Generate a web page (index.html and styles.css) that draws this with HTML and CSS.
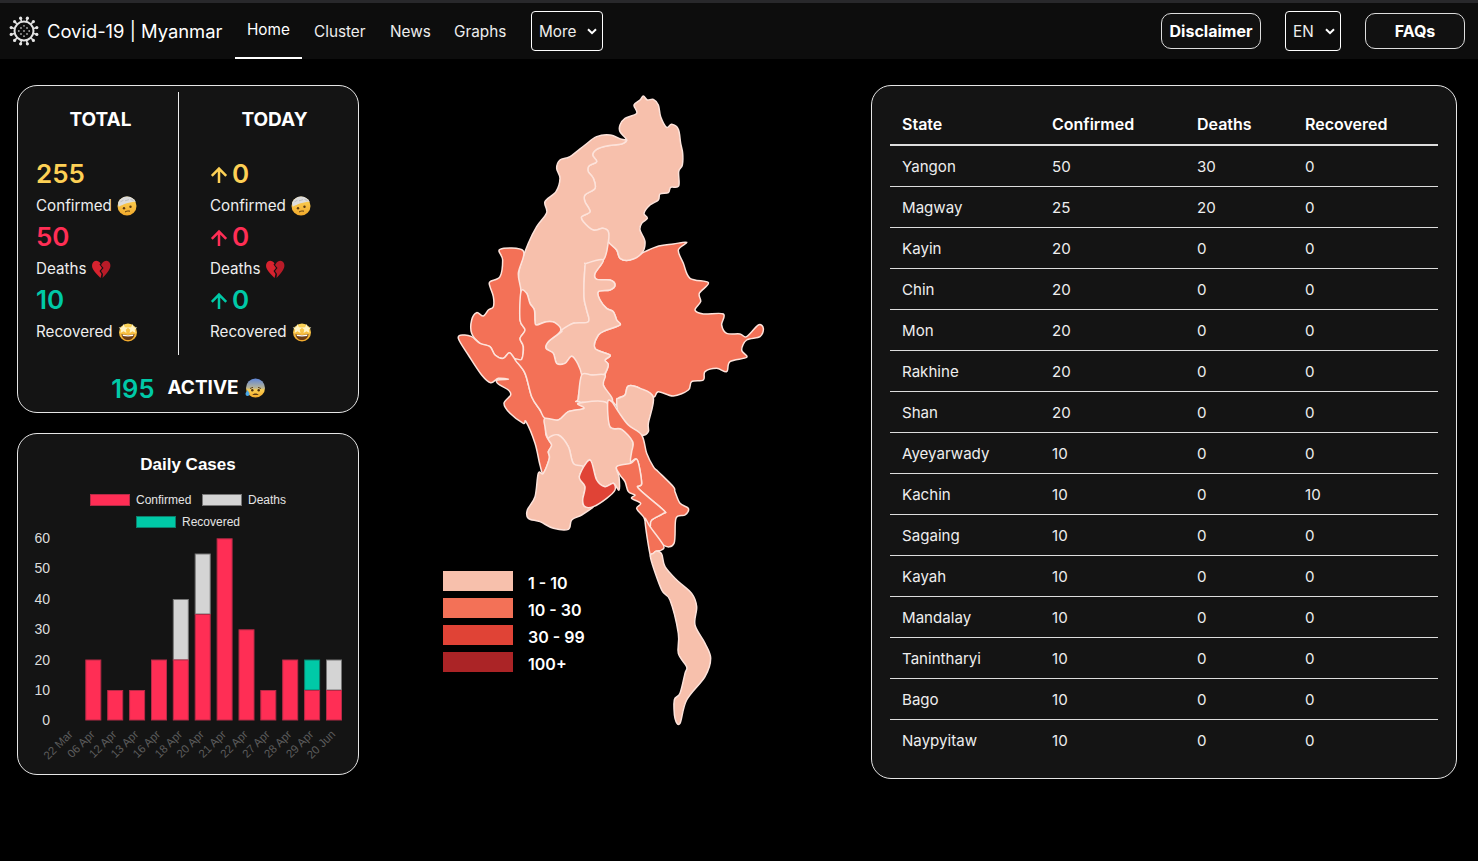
FILE: index.html
```html
<!DOCTYPE html>
<html lang="en">
<head>
<meta charset="utf-8">
<title>Covid-19 | Myanmar</title>
<link rel="stylesheet" href="styles.css">
</head>
<body>
<svg class="defs" aria-hidden="true">
  <defs>
    <linearGradient id="g-face" x1="0" y1="0" x2="0" y2="1"><stop offset="0" stop-color="#fcd65a"/><stop offset="1" stop-color="#f2a92b"/></linearGradient>
    <linearGradient id="g-anx" x1="0" y1="0" x2="0" y2="1"><stop offset="0" stop-color="#5f86d8"/><stop offset=".5" stop-color="#b9b596"/><stop offset=".6" stop-color="#fbcf52"/><stop offset="1" stop-color="#f2a92b"/></linearGradient>
    <symbol id="e-band" viewBox="0 0 20 20">
      <circle cx="10" cy="10" r="9.500" fill="url(#g-face)"/>
      <path d="M1.200 6.200C3 2.500 6.500.5 10 .5c3.800 0 7 2 8.800 5.200C14 5.500 6 8 1.800 10.800 1 9 1 7.500 1.200 6.200z" fill="#dcdcdc"/>
      <path d="M3.500 5.800l3-1.600M8 4.800l4-1.200M13.500 3.500l3 1" stroke="#b0b0b0" stroke-width=".7"/>
      <circle cx="7" cy="12.200" r="1.200" fill="#5b3a12"/><circle cx="13.500" cy="10.800" r="1.200" fill="#5b3a12"/>
      <path d="M8 16c1.600-1 3.500-1.200 5-.8" stroke="#5b3a12" stroke-width="1" fill="none"/>
    </symbol>
    <symbol id="e-heart" viewBox="0 0 20 20">
      <path d="M9.500 4.500C8 2 5 1 3 2.500.5 4.500.5 8 2.500 11c1.500 2.500 4.500 5.500 7 8l1-4-2-3 2.500-3-2.500-3.500z" fill="#d8232f"/>
      <path d="M11 4.500C12.500 2 15.500 1 17.500 2.500c2.500 2 2.500 5.500.5 8.500-1.500 2.500-4 5.500-6.500 8l.5-4-2-3 2.500-3-2.500-3z" fill="#b81b28"/>
    </symbol>
    <symbol id="e-star" viewBox="0 0 20 20">
      <circle cx="10" cy="10.500" r="9" fill="url(#g-face)"/>
      <path d="M5.500 2l1.400 3.200 3.400.3-2.600 2.200.8 3.400-3-1.800-3 1.800.8-3.400L.7 5.500l3.400-.3z" fill="#fff3c4"/>
      <path d="M14.500 2l1.400 3.200 3.400.3-2.600 2.200.8 3.400-3-1.800-3 1.800.8-3.400L9.700 5.500l3.400-.3z" fill="#fff3c4"/>
      <path d="M3.500 12c4 1.200 9 1.200 13 0-.5 4-3.200 6-6.500 6s-6-2-6.500-6z" fill="#6d3d12"/>
      <path d="M4.500 12.600c3.500.8 7.500.8 11 0l-.4 1.500c-3 .6-7.200.6-10.200 0z" fill="#fff"/>
    </symbol>
    <symbol id="e-anx" viewBox="0 0 20 20">
      <circle cx="10.500" cy="10" r="9.500" fill="url(#g-anx)"/>
      <path d="M5 10.500l3-1.200M16 10.500l-3-1.200" stroke="#5b3a12" stroke-width=".9"/>
      <circle cx="7.300" cy="12.300" r="1.200" fill="#4b2f10"/><circle cx="13.700" cy="12.300" r="1.200" fill="#4b2f10"/>
      <path d="M7.500 17c.6-2 5.400-2 6 0z" fill="#5b3a12"/>
      <path d="M2.500 12c1 1.800 2 2.800 2 4a2 2 0 0 1-4 0c0-1.200 1-2.200 2-4z" fill="#49a8e8"/>
    </symbol>
    <symbol id="arrow" viewBox="0 0 18 18">
      <path d="M9 17V3M1.800 9.800L9 2.600l7.200 7.200" fill="none" stroke="currentColor" stroke-width="2.500"/>
    </symbol>
    <symbol id="chev" viewBox="0 0 10 7">
      <path d="M1 1.200l4 4 4-4" fill="none" stroke="#fff" stroke-width="2"/>
    </symbol>
  </defs>
</svg>

<header class="topbar">
  <a class="brand">
    <svg class="logo" viewBox="0 0 30 30" aria-hidden="true">
      <circle cx="15" cy="15" r="9.500" fill="none" stroke="#e4e4e4" stroke-width="2"/>
      <path stroke="#e4e4e4" stroke-width="1.500" d="M17.600 5.300L18.400 2.200M22.100 7.900L24.400 5.600M24.700 12.400L27.800 11.600M24.700 17.600L27.800 18.400M22.100 22.100L24.400 24.400M17.600 24.700L18.400 27.800M12.400 24.700L11.600 27.800M7.900 22.100L5.600 24.400M5.300 17.600L2.200 18.400M5.300 12.400L2.200 11.600M7.900 7.900L5.600 5.600M12.400 5.300L11.600 2.200"/>
      <g fill="#e4e4e4">
        <circle cx="18.400" cy="2.200" r="1.600"/><circle cx="24.400" cy="5.600" r="1.600"/><circle cx="27.800" cy="11.600" r="1.600"/><circle cx="27.800" cy="18.400" r="1.600"/><circle cx="24.400" cy="24.400" r="1.600"/><circle cx="18.400" cy="27.800" r="1.600"/><circle cx="11.600" cy="27.800" r="1.600"/><circle cx="5.600" cy="24.400" r="1.600"/><circle cx="2.200" cy="18.400" r="1.600"/><circle cx="2.200" cy="11.600" r="1.600"/><circle cx="5.600" cy="5.600" r="1.600"/><circle cx="11.600" cy="2.200" r="1.600"/>
      </g>
      <g fill="#aaa">
        <circle cx="15" cy="15" r=".9"/><circle cx="12" cy="12" r=".9"/><circle cx="18" cy="12" r=".9"/><circle cx="12" cy="18" r=".9"/><circle cx="18" cy="18" r=".9"/><circle cx="15" cy="9.800" r=".9"/><circle cx="15" cy="20.200" r=".9"/><circle cx="9.800" cy="15" r=".9"/><circle cx="20.200" cy="15" r=".9"/>
      </g>
    </svg>
    <span>Covid-19 | Myanmar</span>
  </a>
  <nav class="nav">
    <a class="nav-link is-active">Home</a>
    <a class="nav-link">Cluster</a>
    <a class="nav-link">News</a>
    <a class="nav-link">Graphs</a>
    <div class="select select-more"><span>More</span><svg class="chev"><use href="#chev"/></svg></div>
  </nav>
  <div class="actions">
    <button class="pill">Disclaimer</button>
    <div class="select select-lang"><span>EN</span><svg class="chev"><use href="#chev"/></svg></div>
    <button class="pill">FAQs</button>
  </div>
</header>

<main class="main">
  <section class="left">
    <div class="card stats">
      <div class="stat-cols">
        <div class="col col-total">
          <h2 class="col-head">TOTAL</h2>
          <div class="val yellow">255</div>
          <div class="lab">Confirmed <svg class="emo"><use href="#e-band"/></svg></div>
          <div class="val red">50</div>
          <div class="lab">Deaths <svg class="emo"><use href="#e-heart"/></svg></div>
          <div class="val teal">10</div>
          <div class="lab">Recovered <svg class="emo"><use href="#e-star"/></svg></div>
        </div>
        <div class="col col-today">
          <h2 class="col-head">TODAY</h2>
          <div class="val yellow"><svg class="arr"><use href="#arrow"/></svg>0</div>
          <div class="lab">Confirmed <svg class="emo"><use href="#e-band"/></svg></div>
          <div class="val red"><svg class="arr"><use href="#arrow"/></svg>0</div>
          <div class="lab">Deaths <svg class="emo"><use href="#e-heart"/></svg></div>
          <div class="val teal"><svg class="arr"><use href="#arrow"/></svg>0</div>
          <div class="lab">Recovered <svg class="emo"><use href="#e-star"/></svg></div>
        </div>
      </div>
      <div class="active"><span class="val teal">195</span><strong>ACTIVE</strong><svg class="emo"><use href="#e-anx"/></svg></div>
    </div>

    <div class="card chart">
      <svg class="chart-svg" viewBox="18 434 340 340" role="img" aria-label="Daily Cases chart">
        <text class="c-title" x="188" y="470">Daily Cases</text>
        <rect class="b-conf" x="90.500" y="494.500" width="39" height="11"/><text class="c-leg" x="136" y="504">Confirmed</text>
        <rect class="b-death" x="202.500" y="494.500" width="39" height="11"/><text class="c-leg" x="248" y="504">Deaths</text>
        <rect class="b-rec" x="136.500" y="516.500" width="39" height="11"/><text class="c-leg" x="182" y="526">Recovered</text>

        <text class="c-y" x="50" y="543">60</text><text class="c-y" x="50" y="573">50</text><text class="c-y" x="50" y="604">40</text><text class="c-y" x="50" y="634">30</text><text class="c-y" x="50" y="665">20</text><text class="c-y" x="50" y="695">10</text><text class="c-y" x="50" y="725">0</text>

        <rect class="b-conf" x="85.800" y="660" width="15" height="60"/>
        <rect class="b-conf" x="107.700" y="690.500" width="15" height="29.500"/>
        <rect class="b-conf" x="129.600" y="690.500" width="15" height="29.500"/>
        <rect class="b-conf" x="151.500" y="660" width="15" height="60"/>
        <rect class="b-death" x="173.300" y="599.500" width="15" height="60.500"/>
        <rect class="b-conf" x="173.300" y="660" width="15" height="60"/>
        <rect class="b-death" x="195.200" y="554" width="15" height="60"/>
        <rect class="b-conf" x="195.200" y="614.500" width="15" height="105.500"/>
        <rect class="b-conf" x="217.100" y="538.800" width="15" height="181.200"/>
        <rect class="b-conf" x="239" y="629.800" width="15" height="90.200"/>
        <rect class="b-conf" x="260.800" y="690.500" width="15" height="29.500"/>
        <rect class="b-conf" x="282.700" y="660" width="15" height="60"/>
        <rect class="b-rec" x="304.600" y="660" width="15" height="30"/>
        <rect class="b-conf" x="304.600" y="690.500" width="15" height="29.500"/>
        <rect class="b-death" x="326.500" y="660" width="15" height="30"/>
        <rect class="b-conf" x="326.500" y="690.500" width="15" height="29.500"/>

        <text class="c-x" transform="rotate(-45 73.500 735)" x="73.500" y="735">22 Mar</text>
        <text class="c-x" transform="rotate(-45 95.400 735)" x="95.400" y="735">06 Apr</text>
        <text class="c-x" transform="rotate(-45 117.300 735)" x="117.300" y="735">12 Apr</text>
        <text class="c-x" transform="rotate(-45 139.100 735)" x="139.100" y="735">13 Apr</text>
        <text class="c-x" transform="rotate(-45 161 735)" x="161" y="735">16 Apr</text>
        <text class="c-x" transform="rotate(-45 182.900 735)" x="182.900" y="735">18 Apr</text>
        <text class="c-x" transform="rotate(-45 204.800 735)" x="204.800" y="735">20 Apr</text>
        <text class="c-x" transform="rotate(-45 226.700 735)" x="226.700" y="735">21 Apr</text>
        <text class="c-x" transform="rotate(-45 248.500 735)" x="248.500" y="735">22 Apr</text>
        <text class="c-x" transform="rotate(-45 270.400 735)" x="270.400" y="735">27 Apr</text>
        <text class="c-x" transform="rotate(-45 292.300 735)" x="292.300" y="735">28 Apr</text>
        <text class="c-x" transform="rotate(-45 314.200 735)" x="314.200" y="735">29 Apr</text>
        <text class="c-x" transform="rotate(-45 336 735)" x="336" y="735">20 Jun</text>
      </svg>
    </div>
  </section>

  <section class="map">
    <svg class="map-svg" viewBox="0 0 1020 1920" role="img" aria-label="Map of Myanmar">
      <polygon class="r-mid" points="505,455 530,480 540,505 570,510 605,490 650,470 700,462 740,457 715,480 730,520 750,565 805,578 778,610 782,635 765,660 790,672 850,672 845,705 860,730 900,732 920,740 955,705 970,715 960,740 920,750 905,780 920,802 870,815 860,845 830,835 795,845 790,870 755,875 745,900 700,918 655,905 640,922 600,895 565,888 555,915 535,925 535,950 515,930 490,885 495,855 505,825 495,810 510,795 465,775 475,735 500,720 540,705 530,690 520,665 500,655 480,630 475,605 510,600 525,585 510,570 470,568 465,550 490,510 482,468"/>
      <polygon class="r-light" points="610,18 622,30 640,28 655,45 662,80 680,112 695,103 715,118 722,160 728,190 727,225 716,245 716,288 692,292 685,308 660,312 655,330 630,345 612,370 622,385 605,400 600,420 615,455 605,490 570,510 540,505 530,480 505,455 505,425 488,415 460,420 430,395 425,380 450,365 435,335 435,315 465,295 460,265 445,245 447,228 470,215 458,195 470,178 500,168 545,162 560,150 540,125 540,105 555,85 590,70 582,45 600,30"/>
      <polygon class="r-light" points="560,150 545,148 510,135 470,140 435,165 390,200 360,210 350,235 360,265 348,305 315,335 320,368 290,410 265,460 240,530 235,570 243,605 260,610 270,640 283,660 285,695 290,705 320,695 345,698 362,722 400,700 445,695 440,660 432,620 435,530 440,520 490,510 505,455 505,425 488,415 460,420 430,395 425,380 450,365 435,335 435,315 465,295 460,265 445,245 447,228 470,215 458,195 470,178 500,168 545,162"/>
      <polygon class="r-light" points="440,520 490,510 465,550 470,568 510,570 525,585 510,600 475,605 480,630 500,655 520,665 530,690 540,705 500,720 475,735 465,775 510,795 495,810 505,825 490,855 455,855 425,855 398,800 375,820 350,820 340,790 318,775 325,755 365,725 362,722 400,700 445,695 440,660 432,620 435,530"/>
      <polygon class="r-mid" points="180,478 250,483 235,550 243,605 240,690 255,720 240,745 250,770 245,808 225,808 208,788 190,805 165,795 150,770 120,760 95,730 95,690 110,668 130,678 145,660 160,650 160,620 150,590 150,575 180,560 188,510"/>
      <polygon class="r-mid" points="55,745 70,735 95,740 120,760 150,770 165,795 190,805 208,788 225,808 255,850 275,920 300,960 315,985 318,1035 335,1065 325,1085 328,1105 310,1150 300,1125 285,1060 258,995 250,1000 210,970 192,940 212,915 205,900 175,882 172,870 205,868 175,865 152,878 125,855 85,795"/>
      <polygon class="r-mid" points="243,605 260,610 270,640 283,660 285,695 290,705 320,695 345,698 362,722 325,755 318,775 340,790 350,820 375,820 398,800 425,855 415,925 432,955 385,965 355,990 315,985 300,960 275,920 255,850 225,808 245,808 250,770 240,745 255,720 240,690"/>
      <polygon class="r-light" points="425,855 455,855 495,855 490,885 515,935 415,935 415,925"/>
      <polygon class="r-light" points="315,985 355,990 385,965 432,955 415,940 500,938 510,1010 545,1018 578,1055 570,1122 530,1130 537,1160 537,1200 520,1180 495,1190 470,1170 450,1110 430,1130 400,1120 385,1070 355,1035 325,1045 315,1010"/>
      <polygon class="r-light" points="535,925 555,915 565,888 600,895 640,922 625,1000 625,1025 605,1035 565,1005 535,970 530,930"/>
      <polygon class="r-light" points="325,1045 355,1035 385,1070 400,1120 430,1130 418,1160 435,1190 428,1230 435,1250 460,1250 425,1275 395,1290 385,1318 340,1315 300,1295 265,1285 262,1260 285,1220 295,1150 310,1150 328,1105 325,1085 335,1065"/>
      <polygon class="r-dark" points="450,1110 470,1170 495,1190 520,1180 525,1200 500,1225 460,1250 435,1250 428,1230 435,1190 418,1160"/>
      <polygon class="r-mid" points="503,938 515,935 535,965 565,1005 605,1035 620,1090 640,1130 655,1145 700,1190 705,1205 720,1240 745,1255 735,1275 708,1285 702,1360 670,1365 630,1310 635,1290 670,1270 670,1260 595,1195 605,1180 592,1110 572,1115 575,1085 578,1055 545,1018 510,1010"/>
      <polygon class="r-mid" points="530,1130 572,1120 592,1110 605,1180 595,1195 670,1260 670,1270 635,1290 630,1310 615,1290 610,1280 590,1255 602,1240 575,1225 585,1215 565,1205 555,1175 540,1155"/>
      <polygon class="r-mid" points="615,1290 630,1310 670,1365 665,1380 645,1385 632,1400"/>
      <polygon class="r-light" points="650,1383 665,1392 675,1430 710,1470 755,1510 770,1550 765,1605 795,1660 812,1705 795,1760 740,1830 720,1900 705,1885 703,1830 720,1810 735,1750 740,1730 715,1690 715,1630 690,1530 665,1500 632,1405 640,1390"/>
    </svg>
    <ul class="legend">
      <li class="leg-row"><span class="swatch s1"></span><span class="leg-text">1 - 10</span></li>
      <li class="leg-row"><span class="swatch s2"></span><span class="leg-text">10 - 30</span></li>
      <li class="leg-row"><span class="swatch s3"></span><span class="leg-text">30 - 99</span></li>
      <li class="leg-row"><span class="swatch s4"></span><span class="leg-text">100+</span></li>
    </ul>
  </section>

  <section class="card table-card">
    <table class="table">
      <thead>
        <tr><th class="w1">State</th><th class="w2">Confirmed</th><th class="w3">Deaths</th><th class="w4">Recovered</th></tr>
      </thead>
      <tbody>
        <tr><td>Yangon</td><td>50</td><td>30</td><td>0</td></tr>
        <tr><td>Magway</td><td>25</td><td>20</td><td>0</td></tr>
        <tr><td>Kayin</td><td>20</td><td>0</td><td>0</td></tr>
        <tr><td>Chin</td><td>20</td><td>0</td><td>0</td></tr>
        <tr><td>Mon</td><td>20</td><td>0</td><td>0</td></tr>
        <tr><td>Rakhine</td><td>20</td><td>0</td><td>0</td></tr>
        <tr><td>Shan</td><td>20</td><td>0</td><td>0</td></tr>
        <tr><td>Ayeyarwady</td><td>10</td><td>0</td><td>0</td></tr>
        <tr><td>Kachin</td><td>10</td><td>0</td><td>10</td></tr>
        <tr><td>Sagaing</td><td>10</td><td>0</td><td>0</td></tr>
        <tr><td>Kayah</td><td>10</td><td>0</td><td>0</td></tr>
        <tr><td>Mandalay</td><td>10</td><td>0</td><td>0</td></tr>
        <tr><td>Tanintharyi</td><td>10</td><td>0</td><td>0</td></tr>
        <tr><td>Bago</td><td>10</td><td>0</td><td>0</td></tr>
        <tr><td>Naypyitaw</td><td>10</td><td>0</td><td>0</td></tr>
      </tbody>
    </table>
  </section>
</main>
<script src="map.js"></script>
</body>
</html>
```

FILE: styles.css
```css
* { box-sizing: border-box; }
html, body { margin: 0; padding: 0; }
body {
  background: #000;
  color: #fff;
  font-family: Inter, "Liberation Sans", sans-serif;
  font-size: 16px;
  line-height: 24px;
  height: 861px;
  overflow: hidden;
}
.defs { position: absolute; width: 0; height: 0; }

/* top bar */
.topbar {
  display: flex;
  align-items: stretch;
  height: 59px;
  background: #0d0d0d;
  border-top: 3px solid #28282b;
  padding: 0 13px 0 9px;
}
.brand { display: flex; align-items: center; width: 226px; font-size: 18.400px; }
.logo { width: 30px; height: 30px; margin-right: 8px; flex: none; }
.nav { display: flex; align-items: stretch; font-size: 15.300px; }
.nav-link { display: flex; align-items: center; padding: 0 12px; color: #eee; }
.nav-link:nth-child(1) { width: 67px; }
.nav-link:nth-child(2) { width: 76px; }
.nav-link:nth-child(3) { width: 64px; }
.nav-link:nth-child(4) { width: 77px; }
.nav-link:nth-child(n+2) { padding-top: 1px; }
.nav-link.is-active { color: #fff; border-bottom: 2px solid #fff; }
.select {
  align-self: center;
  display: flex;
  align-items: center;
  justify-content: space-between;
  height: 40px;
  padding: 1px 5px 0 7px;
  border: 1px solid #fff;
  border-radius: 4px;
  color: #eee;
  background: #0d0d0d;
  font-size: 15.300px;
}
.select-more { width: 72px; margin-left: 12px; }
.select-lang { width: 56px; }
.chev { width: 10px; height: 7px; }
.actions { display: flex; align-items: center; gap: 24px; margin-left: auto; }
.pill {
  width: 100px;
  height: 36px;
  padding: 0;
  background: #111;
  border: 1px solid #ddd;
  border-radius: 10px;
  color: #fff;
  font: 700 16px/24px Inter, "Liberation Sans", sans-serif;
}

/* layout */
.main {
  display: flex;
  align-items: flex-start;
  padding: 26px 21px 0 17px;
}
.left { display: flex; flex-direction: column; gap: 20px; width: 342px; flex: none; }
.card {
  background: #141414;
  border: 1px solid #e6e6e6;
  border-radius: 20px;
}

/* stats */
.stats { height: 328px; padding-top: 6px; }
.stat-cols { display: flex; height: 263px; }
.col { width: 50%; padding-left: 18px; }
.col-total { width: 161px; border-right: 1px solid #eee; }
.col-today { flex: 1; padding-left: 31px; }
.col-head {
  margin: 16px 0 26px;
  font-size: 19px;
  line-height: 24px;
  font-weight: 700;
  text-align: center;
}
.col-total .col-head { margin-left: -13px; }
.col-today .col-head { margin-left: -19px; }
.val {
  display: flex;
  align-items: center;
  height: 31.500px;
  padding-top: 1px;
  font-size: 26px;
  font-weight: 600;
}
.lab { display: flex; align-items: center; gap: 5px; height: 31.500px; padding-top: 2px; color: #eee; font-size: 15.200px; }
.yellow { color: #fdd055; }
.red { color: #ff2e55; }
.teal { color: #00c9a7; }
.arr { width: 18px; height: 18px; margin-right: 4px; margin-top: 2px; flex: none; }
.emo { width: 20px; height: 20px; flex: none; }
.active {
  display: flex;
  align-items: center;
  justify-content: center;
  height: 38px;
  margin-top: 14px;
  font-size: 19px;
}
.active .val { height: auto; margin-right: 13px; font-size: 25.500px; }
.active strong { font-weight: 700; margin-right: 6px; }

/* chart */
.chart { height: 342px; }
.chart-svg { display: block; width: 340px; height: 340px; }
.c-title { font: 700 17px "Liberation Sans", sans-serif; fill: #fff; text-anchor: middle; }
.c-leg { font: 12px "Liberation Sans", sans-serif; fill: #e4e4e4; }
.c-y { font: 14px "Liberation Sans", sans-serif; fill: #dcdcdc; text-anchor: end; }
.c-x { font: 11.500px "Liberation Sans", sans-serif; fill: #5c5c5c; text-anchor: end; }
.b-conf { fill: #ff2e55; stroke: #b62a46; stroke-width: 1; }
.b-death { fill: #d4d4d4; stroke: #777; stroke-width: 1; }
.b-rec { fill: #00c9a7; stroke: #0c7f6c; stroke-width: 1; }

/* map */
.map { position: relative; width: 340px; margin: 5px 0 0 81px; flex: none; }
.map-svg { display: block; width: 340px; height: 640px; }
.r-light, .r-mid, .r-dark { stroke: #fde3db; stroke-width: 4.500; stroke-linejoin: round; }
.r-light { fill: #f7c0ac; }
.r-mid { fill: #f37157; }
.r-dark { fill: #e04336; }
.legend {
  position: absolute;
  left: 3px;
  top: 481px;
  margin: 0;
  padding: 0;
  list-style: none;
  display: flex;
  flex-direction: column;
  gap: 7px;
  font-weight: 600;
}
.leg-row { display: flex; align-items: center; gap: 15px; height: 20px; }
.leg-text { margin-top: 4px; }
.swatch { width: 70px; height: 20px; }
.s1 { background: #f7c0ac; }
.s2 { background: #f37157; }
.s3 { background: #e04336; }
.s4 { background: #ab2426; }

/* table */
.table-card { width: 586px; margin-left: auto; padding: 17px 18px 18px; }
.table { width: 100%; border-collapse: separate; border-spacing: 0; table-layout: fixed; }
.table th {
  padding: 9px 12px 8px;
  text-align: left;
  font-weight: 600;
  border-bottom: 2px solid #ddd;
}
.table td { padding: 9px 12px 7px; color: #eee; font-size: 15.100px; border-bottom: 1px solid #ddd; }
.table tbody tr:last-child td { border-bottom: 0; }
.w1 { width: 150px; }
.w2 { width: 145px; }
.w3 { width: 108px; }
```

FILE: map.js
```js
// Draw the map's region outlines as smooth curves through their sampled points.
document.querySelectorAll('.map-svg polygon').forEach(function (poly) {
  var p = poly.getAttribute('points').trim().split(/\s+/).map(function (s) {
    return s.split(',').map(Number);
  });
  var n = p.length;
  var d = 'M' + p[0].join(' ');
  for (var i = 0; i < n; i++) {
    var a = p[(i + n - 1) % n], b = p[i], c = p[(i + 1) % n], e = p[(i + 2) % n];
    d += 'C' + (b[0] + (c[0] - a[0]) / 6).toFixed(1) + ' ' + (b[1] + (c[1] - a[1]) / 6).toFixed(1) +
         ' ' + (c[0] - (e[0] - b[0]) / 6).toFixed(1) + ' ' + (c[1] - (e[1] - b[1]) / 6).toFixed(1) +
         ' ' + c[0] + ' ' + c[1];
  }
  var path = document.createElementNS('http://www.w3.org/2000/svg', 'path');
  path.setAttribute('class', poly.getAttribute('class'));
  path.setAttribute('d', d + 'Z');
  poly.replaceWith(path);
});
```
